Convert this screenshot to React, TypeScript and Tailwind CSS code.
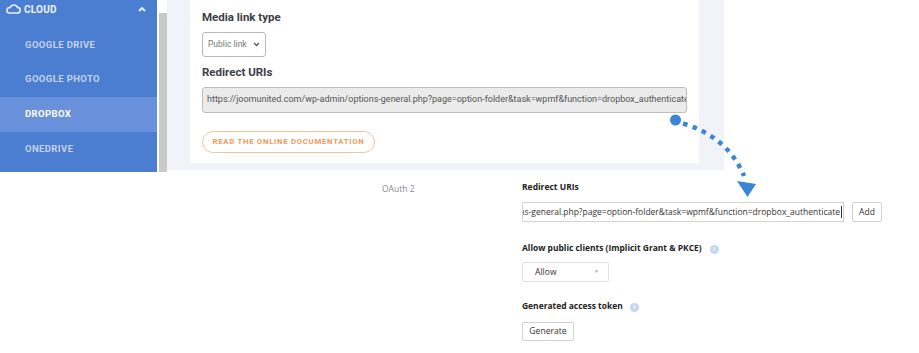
import React from "react";

const sideItems = [
  { label: "GOOGLE DRIVE", active: false },
  { label: "GOOGLE PHOTO", active: false },
  { label: "DROPBOX", active: true },
  { label: "ONEDRIVE", active: false },
];

function InfoIcon() {
  return (
    <span className="inline-flex h-[9px] w-[9px] items-center justify-center rounded-full bg-[#c3d7ef] text-[6px] font-bold leading-none text-white">
      i
    </span>
  );
}

export default function App() {
  return (
    <div className="relative flex h-[353px] w-[919px] flex-col overflow-hidden bg-white">
      {/* Top screenshot */}
      <div className="flex h-[172px] shrink-0 font-['Roboto',sans-serif]">
        <div className="flex h-full w-[157px] flex-col bg-[#4b7dd1]">
          <div className="flex h-[27.5px] items-start">
            <div className="flex h-[18px] w-full items-center pl-[5px] pr-[11px]">
              <svg width="16" height="10" viewBox="0 0 16 10" fill="none" stroke="#e9f0fb" strokeWidth="1.6">
                <path d="M4.2 9h8a2.8 2.8 0 0 0 .3-5.6A3.9 3.9 0 0 0 5.2 3.6 2.7 2.7 0 0 0 4.2 9z" strokeLinejoin="round" />
              </svg>
              <span className="ml-[3px] text-[10px] font-bold tracking-[0.2px] text-[#eef3fc]">CLOUD</span>
              <svg className="ml-auto" width="8" height="6" viewBox="0 0 8 6" fill="none" stroke="#eef3fc" strokeWidth="1.8">
                <path d="M1 5 L4 2 L7 5" />
              </svg>
            </div>
          </div>
          {sideItems.map((it) => (
            <div
              key={it.label}
              className={
                "flex h-[34.7px] items-center pl-[25px] text-[9.5px] font-bold tracking-[0.4px] " +
                (it.active ? "bg-[#6890db] text-white" : "text-[#c3d3f0]")
              }
            >
              {it.label}
            </div>
          ))}
        </div>
        <div className="flex h-full w-[10px] flex-col bg-white pl-[2px] pt-[13px]">
          <div className="w-[8px] flex-1 bg-[#c9c9c9]" />
        </div>
        <div className="h-[170px] w-[557px] bg-[#f1f3f8] pl-[23px]">
          <div className="flex h-[163px] w-[509px] flex-col bg-white pl-[12px] pt-[9px]">
            <div className="h-[16px] text-[11.5px] font-bold leading-[16px] text-[#3d3d46]">Media link type</div>
            <div className="mt-[7px] flex h-[25px] w-[64px] items-center rounded-[3px] border border-[#b9b9b9] pl-[5px] text-[8.5px] text-[#777]">
              <span>Public link</span>
              <svg className="ml-[6px]" width="7" height="5" viewBox="0 0 7 5" fill="none" stroke="#555" strokeWidth="1.3">
                <path d="M1 1 L3.5 3.5 L6 1" />
              </svg>
            </div>
            <div className="mt-[7px] h-[16px] text-[11.5px] font-bold leading-[16px] text-[#3d3d46]">Redirect URIs</div>
            <div className="mt-[7px] flex h-[26px] w-[485px] items-center overflow-hidden whitespace-nowrap rounded-[3px] border border-[#bdbdbd] bg-[#ebebeb] pl-[4px] text-[9px] text-[#555]">
              https://joomunited.com/wp-admin/options-general.php?page=option-folder&amp;task=wpmf&amp;function=dropbox_authenticate
            </div>
            <div className="mt-[18px] flex h-[22px] w-[173px] items-center justify-center rounded-full border border-[#f5c39c] text-[7.8px] font-bold tracking-[0.7px] text-[#f1975c]">
              READ THE ONLINE DOCUMENTATION
            </div>
          </div>
        </div>
      </div>

      {/* Bottom screenshot */}
      <div className="flex flex-1 font-['Open_Sans',sans-serif]">
        <div className="w-[382px] shrink-0" />
        <div className="w-[140px] shrink-0 pt-[10px] text-[8.5px] leading-[14px] text-[#8a8a8a]">OAuth 2</div>
        <div className="flex flex-col pt-[8px]">
          <div className="h-[14px] text-[8.5px] font-bold leading-[14px] text-[#222]">Redirect URIs</div>
          <div className="mt-[8px] flex items-center">
            <div className="flex h-[20px] w-[322px] items-center justify-end overflow-hidden whitespace-nowrap border border-[#d4d4d4] pr-[1px] text-[8.5px] text-[#333]">
              <span>https://joomunited.com/wp-admin/options-general.php?page=option-folder&amp;task=wpmf&amp;function=dropbox_authenticate</span>
              <span className="ml-[1px] h-[12px] w-[1px] shrink-0 bg-[#333]" />
            </div>
            <div className="ml-[8px] flex h-[20px] w-[30px] items-center justify-center rounded-[2px] border border-[#d0d0d0] text-[8.5px] text-[#333]">
              Add
            </div>
          </div>
          <div className="mt-[19px] flex h-[14px] items-center text-[8.45px] font-bold leading-[14px] text-[#222]">
            <span>Allow public clients (Implicit Grant &amp; PKCE)</span>
            <span className="ml-[8px]"><InfoIcon /></span>
          </div>
          <div className="mt-[7px] flex h-[20px] w-[87px] items-center rounded-[2px] border border-[#e0e0e0] pl-[12px] pr-[9px] text-[8.6px] text-[#333]">
            <span>Allow</span>
            <span className="ml-auto text-[5px] text-[#aaa]">▼</span>
          </div>
          <div className="mt-[17px] flex h-[14px] items-center text-[8.45px] font-bold leading-[14px] text-[#222]">
            <span>Generated access token</span>
            <span className="ml-[7px]"><InfoIcon /></span>
          </div>
          <div className="mt-[9px] flex h-[19px] w-[52px] items-center justify-center rounded-[2px] border border-[#d0d0d0] text-[8.6px] text-[#333]">
            Generate
          </div>
        </div>
      </div>

      {/* Dotted arrow overlay */}
      <svg className="pointer-events-none absolute left-0 top-0" width="919" height="353" viewBox="0 0 919 353">
        <circle cx="675.5" cy="120" r="5.5" fill="#3b86d4" />
        <path d="M683 123.5 Q728 137 744 176" fill="none" stroke="#3b86d4" strokeWidth="4.5" strokeDasharray="4.5 5.5" />
        <polygon points="737,181 756,184 747.5,197" fill="#3b86d4" />
      </svg>
    </div>
  );
}
